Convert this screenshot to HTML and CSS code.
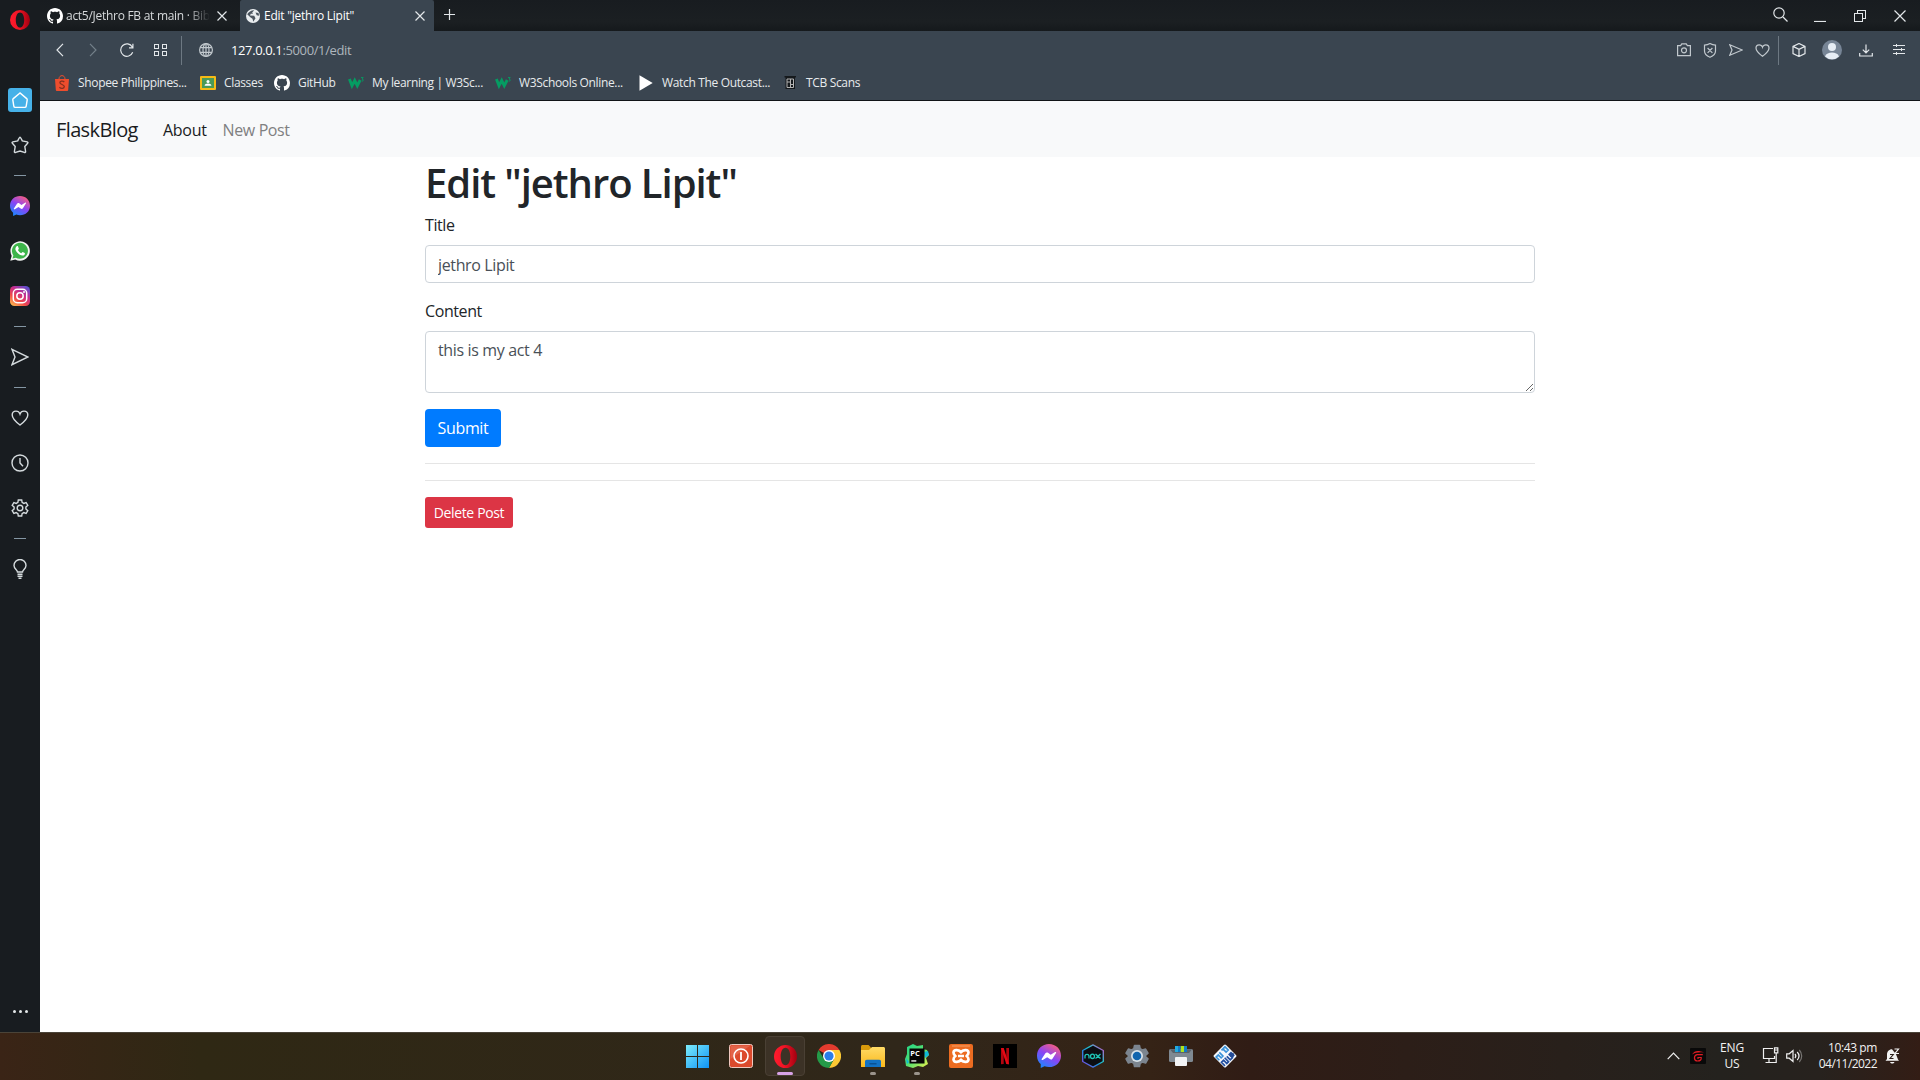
FILE: index.html
```html
<!DOCTYPE html>
<html lang="en">
<head>
<meta charset="utf-8">
<title>Edit "jethro Lipit"</title>
<link rel="stylesheet" href="styles.css">
</head>
<body>
<svg class="defs" width="0" height="0">
  <defs>
    <linearGradient id="operaRing" x1="0" x2="1"><stop offset="0" stop-color="#ff1b2d"/><stop offset=".45" stop-color="#f01425"/><stop offset="1" stop-color="#a00010"/></linearGradient>
    <linearGradient id="msg" x1=".2" y1="1" x2=".8" y2="0"><stop offset="0" stop-color="#168aff"/><stop offset=".5" stop-color="#8a45f5"/><stop offset="1" stop-color="#ff6078"/></linearGradient>
    <linearGradient id="insta" x1=".1" y1="1" x2=".8" y2="0"><stop offset="0" stop-color="#fec04f"/><stop offset=".35" stop-color="#f0484a"/><stop offset=".65" stop-color="#c72d8e"/><stop offset="1" stop-color="#5b4fd0"/></linearGradient>
    <linearGradient id="win" x1="0" y1="0" x2="1" y2="1"><stop offset="0" stop-color="#7cecfb"/><stop offset="1" stop-color="#0f93f5"/></linearGradient>
    <linearGradient id="folder" x1="0" y1="0" x2="0" y2="1"><stop offset="0" stop-color="#ffda66"/><stop offset="1" stop-color="#fbb91c"/></linearGradient>
    <linearGradient id="pcg" x1="0" y1="0" x2="1" y2="1"><stop offset="0" stop-color="#20d68a"/><stop offset=".5" stop-color="#55e070"/><stop offset="1" stop-color="#f4f04a"/></linearGradient>
    <linearGradient id="nox" x1="0" y1="1" x2="1" y2="0"><stop offset="0" stop-color="#8a3fe0"/><stop offset=".4" stop-color="#1d8fe0"/><stop offset=".6" stop-color="#22c5c9"/><stop offset="1" stop-color="#e040c8"/></linearGradient>
    <symbol id="octocat" viewBox="0 0 16 16"><path fill="#fff" d="M8 0C3.58 0 0 3.58 0 8c0 3.54 2.29 6.53 5.47 7.59.4.07.55-.17.55-.38 0-.19-.01-.82-.01-1.49-2.01.37-2.53-.49-2.69-.94-.09-.23-.48-.94-.82-1.13-.28-.15-.68-.52-.01-.53.63-.01 1.08.58 1.23.82.72 1.21 1.87.87 2.33.66.07-.52.28-.87.51-1.07-1.78-.2-3.64-.89-3.64-3.95 0-.87.31-1.59.82-2.15-.08-.2-.36-1.02.08-2.12 0 0 .67-.21 2.2.82.64-.18 1.32-.27 2-.27s1.36.09 2 .27c1.53-1.04 2.2-.82 2.2-.82.44 1.1.16 1.92.08 2.12.51.56.82 1.27.82 2.15 0 3.07-1.87 3.75-3.65 3.95.29.25.54.73.54 1.48 0 1.07-.01 1.93-.01 2.2 0 .21.15.46.55.38A8.01 8.01 0 0 0 16 8c0-4.42-3.58-8-8-8z"/></symbol>
    <symbol id="opera" viewBox="0 0 20 20"><path fill="url(#operaRing)" fill-rule="evenodd" d="M10 0a10 10 0 1 0 0 20 10 10 0 0 0 0-20zm0 2.400c2.700 0 4.200 3.500 4.200 7.600s-1.500 7.600-4.200 7.600-4.200-3.500-4.200-7.600 1.500-7.600 4.200-7.600z"/></symbol>
    <symbol id="messenger" viewBox="0 0 20 20"><path fill="url(#msg)" d="M10 0C4.300 0 0 4.200 0 9.700c0 2.900 1.200 5.300 3.100 7V20l3.200-1.400c1.100.4 2.400.6 3.700.6 5.700 0 10-4 10-9.500S15.700 0 10 0z"/><path fill="#fff" d="M3.900 12.500 7 7.700c.5-.8 1.500-.9 2.200-.4l2.200 1.600 3.700-2.200c.6-.3 1.100.3.8.8l-3 4.700c-.5.800-1.500.9-2.200.4L8.500 11l-3.700 2.300c-.6.3-1.200-.3-.9-.8z"/></symbol>
    <symbol id="w3" viewBox="0 0 16 16"><path fill="none" stroke="#059c62" stroke-width="2.900" d="M1.400 4l2.600 6.700L6.700 5.500l2.600 5.200L12.200 5"/><path fill="none" stroke="#059c62" stroke-width=".9" d="M13 2.500h2.200l-1.200 1.500c1.800 0 1.700 2.400-.2 2.200"/></symbol>
    <symbol id="heart" viewBox="0 0 18 18"><path d="M9 16C5 13 1.200 9.800 1.200 6c0-2.300 1.700-3.900 3.800-3.900C6.900 2.100 8.400 3.200 9 5c.6-1.800 2.100-2.900 4-2.900 2.100 0 3.800 1.600 3.800 3.900 0 3.800-3.800 7-7.800 10z"/></symbol>
    <symbol id="send" viewBox="0 0 18 18"><path d="M1 1.300 17 9 1 16.700 4 9z"/></symbol>
  </defs>
</svg>

<div class="screen">
  <div class="browser">
    <aside class="sidebar">
      <div class="side-logo"><svg width="20" height="20"><use href="#opera"/></svg></div>
      <div class="side-item"><span class="home"><svg class="line" width="18" height="18" viewBox="0 0 18 18"><path d="M9 2 2.300 7.600c-.3.300-.6.800-.5 1.300l1 6.200c.1.800.8 1.300 1.500 1.300h9.400c.7 0 1.400-.5 1.500-1.300l1-6.200c.1-.5-.2-1-.5-1.300z"/></svg></span></div>
      <div class="side-item"><svg class="line" width="18" height="18" viewBox="0 0 18 18"><path d="M9 1.200c.5 0 .8.600 2.300 3.700l4.900 1c.8.200 1 .8.400 1.400L13.800 10.500l.8 5c.1.900-.6 1.300-1.300.9L9 15l-4.300 1.400c-.7.400-1.400 0-1.300-.9l.8-5L1.400 7.300c-.6-.6-.4-1.200.4-1.400l4.900-1C8.200 1.800 8.500 1.200 9 1.200z"/></svg></div>
      <div class="side-sep"></div>
      <div class="side-item"><svg width="20" height="20"><use href="#messenger"/></svg></div>
      <div class="side-item"><svg width="20" height="20" viewBox="0 0 20 20"><path fill="#f2f5f2" d="M.3 19.700 1.700 14.800A9.700 9.700 0 1 1 5.300 18.400z"/><path fill="#3db54a" d="M2.500 17.500l.9-3.100a8 8 0 1 1 2.500 2.300z"/><path fill="#fff" d="M6.800 5.200c.5-.3 1-.2 1.200.3l.8 1.900c.2.500-.8 1.300-.9 1.600.8 1.600 2 2.600 3.400 3.200.4-.1 1-1.300 1.500-1.200l1.900.9c.5.300.2 1.600-.4 2.100-1.100.9-2.800.8-5-.5-2-1.200-3.600-3.300-3.900-4.900-.2-1.300.4-2.800 1.400-3.400z"/></svg></div>
      <div class="side-item"><svg width="20" height="20" viewBox="0 0 20 20"><rect width="20" height="20" rx="4.500" fill="url(#insta)"/><g fill="none" stroke="#fff" stroke-width="1.500"><rect x="3.300" y="3.300" width="13.400" height="13.400" rx="4"/><circle cx="10" cy="10" r="3.200"/></g><circle cx="14" cy="6" r="1" fill="#fff"/></svg></div>
      <div class="side-sep"></div>
      <div class="side-item"><svg class="line" width="18" height="18"><use href="#send"/></svg></div>
      <div class="side-sep"></div>
      <div class="side-item"><svg class="line" width="18" height="18"><use href="#heart"/></svg></div>
      <div class="side-item"><svg class="line" width="18" height="18" viewBox="0 0 18 18"><circle cx="9" cy="9" r="8"/><path d="M9 4v5l3 3.300"/></svg></div>
      <div class="side-item"><svg class="line" width="18" height="18" viewBox="0 0 18 18"><circle cx="9" cy="9" r="2.800"/><path d="M7.300 1h3.400l.4 2.400 1.700 1 2.300-.9L16.800 6.400 14.900 8v2l1.900 1.600-1.700 2.900-2.300-.9-1.700 1-.4 2.400H7.300l-.4-2.400-1.700-1-2.300.9-1.700-2.900L3.100 10V8L1.200 6.400l1.700-2.900 2.300.9 1.700-1z"/></svg></div>
      <div class="side-sep"></div>
      <div class="side-item"><svg class="line" width="14" height="20" viewBox="0 0 14 20"><path d="M4.500 13c0-2.200-3.500-3.200-3.500-6.500a6 6 0 0 1 12 0c0 3.300-3.500 4.300-3.500 6.500zM4.500 15.300h5M4.500 17.300h5M5.500 19.300h3"/></svg></div>
      <div class="side-more"><i></i><i></i><i></i></div>
    </aside>

    <div class="window">
      <header class="tabs">
        <div class="tab">
          <svg width="16" height="16"><use href="#octocat"/></svg>
          <span class="tab-title faded">act5/Jethro FB at main · Bib</span>
          <svg class="line close" width="10" height="10" viewBox="0 0 10 10"><path d="M.5.5l9 9M9.500.5l-9 9"/></svg>
        </div>
        <div class="tab active">
          <svg width="14" height="14" viewBox="0 0 14 14"><circle cx="7" cy="7" r="7" fill="#e9edf0"/><path fill="#4c5660" d="M1.200 5.200C2.500 3 5.500 1.100 8.200 1.300L6.200 3.500l.8 1.300H4.800L4 6.500l4.200.3 1.300 2.500-2.200 3.500-.8-3-2.200-1.600zM9.500 3.500l3 .5.700 2.700-2.500-.5z"/></svg>
          <span class="tab-title">Edit "jethro Lipit"</span>
          <svg class="line close" width="10" height="10" viewBox="0 0 10 10"><path d="M.5.5l9 9M9.500.5l-9 9"/></svg>
        </div>
        <svg class="line new-tab" width="11" height="11" viewBox="0 0 11 11"><path d="M5.500 0v11M0 5.500h11"/></svg>
        <div class="window-buttons">
          <span><svg class="line" width="15" height="15" viewBox="0 0 15 15"><circle cx="6" cy="6" r="5.200"/><path d="M10 10l4.500 4.500"/></svg></span>
          <span><svg class="line" width="12" height="12" viewBox="0 0 12 12"><path d="M0 11.500h12"/></svg></span>
          <span><svg class="line crisp" width="12" height="12" viewBox="0 0 12 12"><path d="M.5 3.500h8v8h-8zM3.500 3.500v-3h8v8h-3"/></svg></span>
          <span><svg class="line" width="12" height="12" viewBox="0 0 12 12"><path d="M.5.5l11 11M11.500.5l-11 11"/></svg></span>
        </div>
      </header>

      <div class="toolbar">
        <div class="nav-icons">
          <svg class="line" width="14" height="14" viewBox="0 0 14 14"><path d="M10 .8 4 7l6 6.200"/></svg>
          <svg class="line dim" width="14" height="14" viewBox="0 0 14 14"><path d="M4 .8 10 7l-6 6.200"/></svg>
          <svg class="line" width="14" height="14" viewBox="0 0 14 14"><path d="M12.700 9.300A6.200 6.200 0 1 1 12.300 4M12.900.8v4H9"/></svg>
          <svg class="line crisp" width="13" height="12" viewBox="0 0 13 12"><path d="M.5.5h4v4h-4zM8.500.5h4v4h-4zM.5 7.500h4v4h-4zM8.500 7.500h4v4h-4z"/></svg>
        </div>
        <div class="bar"></div>
        <svg class="line soft globe" width="14" height="14" viewBox="0 0 14 14"><circle cx="7" cy="7" r="6.400"/><ellipse cx="7" cy="7" rx="3" ry="6.400"/><path d="M1.200 4.600h11.600M1.200 9.400h11.600M7 .6v12.800"/></svg>
        <div class="address"><b>127.0.0.1</b>:5000/1/edit</div>
        <div class="page-icons">
          <svg class="line soft" width="14" height="14" viewBox="0 0 14 14"><path d="M.6 2.700h3L4.800.9h4.400l1.200 1.800h3v10H.6z"/><circle cx="7" cy="7.300" r="2.500"/></svg>
          <svg class="line soft" width="14" height="15" viewBox="0 0 14 15"><path d="M7 .6c1.700 1 3.500 1.500 5.500 1.500v6c0 3-2.500 5-5.500 6.200C4 13.100 1.500 11.100 1.500 8.100v-6c2 0 3.800-.5 5.500-1.500zM4.600 5l4.800 4.800M9.400 5 4.600 9.800"/></svg>
          <svg class="line soft" width="14" height="12" viewBox="0 0 14 12"><path d="M.8.800 13.200 6 .8 11.200 3 6z"/></svg>
          <svg class="line soft small-heart" width="15" height="15"><use href="#heart"/></svg>
        </div>
        <div class="bar"></div>
        <div class="user-icons">
          <svg class="line" width="14" height="14" viewBox="0 0 14 14"><path d="M7 .5l6 2.900v7.200l-6 2.900-6-2.900V3.400zM1 3.400l6 3 6-3M7 6.400v7"/></svg>
          <svg width="20" height="20" viewBox="0 0 20 20"><circle cx="10" cy="10" r="10" fill="#778596"/><circle cx="10" cy="7" r="4" fill="#e6edf5"/><path fill="#e6edf5" d="M3 16.500c1-3 4-4 7-4s6 1 7 4a10 10 0 0 1-14 0z"/></svg>
          <svg class="line" width="14" height="13" viewBox="0 0 14 13"><path d="M7 .5v8.200M3.800 5.700 7 8.900l3.200-3.200M.7 9v3h12.600V9"/></svg>
          <svg class="line crisp" width="12" height="12" viewBox="0 0 12 12"><path d="M0 1.500h12M0 5.500h12M0 9.500h12M3.500 0v3M8.500 4v3M3.500 8v3"/></svg>
        </div>
      </div>

      <nav class="bookmarks">
        <a><svg width="16" height="16" viewBox="0 0 16 16"><path fill="#ee4d2d" d="M1 4h14l-.8 10.700c0 .7-.6 1.300-1.300 1.300H3.100c-.7 0-1.300-.6-1.300-1.300z"/><path fill="none" stroke="#ee4d2d" d="M5 4c0-4.500 6-4.500 6 0"/><path fill="none" stroke="#83301f" stroke-width="1.300" d="M10.300 7c-1.500-1.500-4.500-1-4.400.8.100 1.900 4.400 1.500 4.400 3.700 0 2-3 2.500-4.900.8"/></svg><span>Shopee Philippines...</span></a>
        <a><svg width="16" height="16" viewBox="0 0 16 16"><rect y="1" width="16" height="14" rx="1" fill="#f5ba15"/><rect x="2" y="3" width="12" height="10" fill="#4a9a58"/><circle cx="8" cy="6.400" r="1.500" fill="#fff"/><path fill="#fff" d="M4.600 10.800c0-3 6.800-3 6.800 0z"/></svg><span>Classes</span></a>
        <a><svg width="16" height="16"><use href="#octocat"/></svg><span>GitHub</span></a>
        <a><svg width="16" height="16"><use href="#w3"/></svg><span>My learning | W3Sc...</span></a>
        <a><svg width="16" height="16"><use href="#w3"/></svg><span>W3Schools Online...</span></a>
        <a><svg width="16" height="16" viewBox="0 0 16 16"><path fill="#fff" d="M1.500.3v15.400L14.700 8z"/></svg><span>Watch The Outcast...</span></a>
        <a><svg width="16" height="16" viewBox="0 0 16 16"><path fill="#15191c" d="M2.500 1h11.500v1.500H13V14H3.500V2.500h-1z"/><path fill="none" stroke="#b3b3b3" d="M5 4h6.500v8.500H5zM8.500 4v8.500M5 7h3M9 9.500h2.500"/></svg><span>TCB Scans</span></a>
      </nav>

      <main class="page">
        <nav class="navbar">
          <a class="brand">FlaskBlog</a>
          <a class="nav-link about">About</a>
          <a class="nav-link muted">New Post</a>
        </nav>
        <div class="container">
          <h1>Edit "jethro Lipit"</h1>
          <form>
            <div class="form-group">
              <label for="title">Title</label>
              <input class="form-control" id="title" type="text" value="jethro Lipit">
            </div>
            <div class="form-group">
              <label for="content">Content</label>
              <textarea class="form-control" id="content" spellcheck="false">this is my act 4</textarea>
            </div>
            <button class="btn submit" type="button">Submit</button>
          </form>
          <hr>
          <hr>
          <button class="btn delete" type="button">Delete Post</button>
        </div>
      </main>
    </div>
  </div>

  <footer class="taskbar">
    <div class="apps">
      <span class="app"><svg width="23" height="23" viewBox="0 0 23 23"><path fill="url(#win)" d="M0 0h11v11H0zM12 0h11v11H12zM0 12h11v11H0zM12 12h11v11H12z"/></svg></span>
      <span class="app"><svg width="24" height="24" viewBox="0 0 24 24"><rect x=".5" y=".5" width="23" height="23" rx="2" fill="#dc4a2d" stroke="#efc8bf"/><path fill="#e97960" d="M1.500 1.500h20L1.500 15z" opacity=".55"/><circle cx="12" cy="12" r="7" fill="none" stroke="#fff" stroke-width="1.600"/><path stroke="#fff" stroke-width="1.800" d="M12 8v8"/></svg></span>
      <span class="app current"><svg width="23" height="23"><use href="#opera"/></svg></span>
      <span class="app"><svg width="24" height="24" viewBox="0 0 24 24"><path fill="#e33b2e" d="M12 12 1.600 6A12 12 0 0 1 22.400 6z"/><path fill="#fcc934" d="M12 12V6h10.400A12 12 0 0 1 12 24l5-9z"/><path fill="#249a48" d="M12 12l5 3-5 9A12 12 0 0 1 1.600 6L7 15z"/><circle cx="12" cy="12" r="6" fill="#fff"/><circle cx="12" cy="12" r="4.600" fill="#2a7de9"/></svg></span>
      <span class="app running"><svg width="24" height="22" viewBox="0 0 24 22"><path fill="#d89a0b" d="M0 1.500C0 .7.700 0 1.500 0h6l2.500 2.500V6H0z"/><path fill="url(#folder)" d="M0 5h8l3-3h11.500c.8 0 1.500.7 1.500 1.500V22H0z"/><path fill="#1272c4" d="M4 22v-5.500c0-1 .8-1.700 1.700-1.700h12.600c1 0 1.700.7 1.700 1.700V22z"/><path fill="#0a5295" d="M8.500 18h7v1.500h-7z"/></svg></span>
      <span class="app running"><svg width="24" height="24" viewBox="0 0 24 24"><path fill="url(#pcg)" d="M2 3l6-3 4 2 6-1v4l4 1 2 5-3 3 2 6-5 3-5-1-5 2-7-2-1-7 2-5z"/><path fill="#10b8d8" d="M19 8l4-1 1 4-4 3zM1 14l3 4-2 2z"/><rect x="4.500" y="4.500" width="15" height="15" fill="#050505"/><text x="5.300" y="11.800" class="pc-text">PC</text><path fill="#fff" d="M6.300 16.300h5v1.300h-5z"/></svg></span>
      <span class="app"><svg width="24" height="24" viewBox="0 0 24 24"><rect width="24" height="24" rx="2" fill="#ec6c21"/><path fill="#f5a16b" d="M3 1.500h18v1H3z"/><path fill="none" stroke="#fff" stroke-width="2.700" stroke-linejoin="round" d="M12 8.300C10.500 6 4.800 4.800 4.500 8.500c0 1.800.8 2.700 2 3.500-1.200.8-2 1.700-2 3.500.3 3.700 6 2.500 7.500.2 1.500 2.300 7.200 3.500 7.500-.2 0-1.800-.8-2.700-2-3.500 1.200-.8 2-1.700 2-3.500-.3-3.700-6-2.500-7.500-.2zM9 12h6"/></svg></span>
      <span class="app"><svg width="24" height="24" viewBox="0 0 24 24"><path d="M0 0h24v24H0z"/><path fill="#b1060f" d="M8 4h2.700v16L8 20.300zM13.300 4H16v16.300l-2.700-.3z"/><path fill="#e50914" d="M8 4h2.700L16 20.300l-2.700-.3z"/></svg></span>
      <span class="app"><svg width="24" height="24"><use href="#messenger"/></svg></span>
      <span class="app"><svg width="24" height="24" viewBox="0 0 24 24"><path fill="#0b0e13" stroke="url(#nox)" stroke-width="1.400" stroke-linejoin="round" d="M12 .9 22.300 6.500v11L12 23.100 1.700 17.500v-11z"/><path fill="none" stroke="#1fc7b8" stroke-width="1.300" d="M4 14.500v-2.200c0-2.600 4-2.600 4 0v2.200M14.500 10l5 4.500M19.500 10l-5 4.500"/><ellipse cx="11.500" cy="12.300" rx="2" ry="2.200" fill="none" stroke="#1fc7b8" stroke-width="1.300"/></svg></span>
      <span class="app"><svg width="24" height="24" viewBox="0 0 24 24"><path fill="#7c858f" stroke="#7c858f" stroke-width="1.500" stroke-linejoin="round" d="M9.500 1.500h5l.7 3.200 2.200 1.300 3.200-1 2.400 4.200-2.400 2.200v1.300l2.400 2.200-2.400 4.200-3.200-1-2.200 1.300-.7 3.200h-5l-.7-3.200L6.600 18l-3.200 1L1 14.900l2.400-2.200v-1.300L1 9.200 3.400 5l3.200 1 2.200-1.300z"/><circle cx="12" cy="12" r="6" fill="#d9e2e8"/><circle cx="12" cy="12" r="4.300" fill="#1265ae"/></svg></span>
      <span class="app"><svg width="24" height="20" viewBox="0 0 24 20"><rect y="3" width="24" height="13" rx="1.500" fill="#7f8992"/><path fill="#5a636b" d="M1 3.300h22L20 7H4z"/><path fill="#20abdf" d="M6 0h3v6H6z"/><path fill="#aee31d" d="M11.500 0H15v6h-3.500z"/><path fill="#117ac8" d="M9 0h2.500v6H9zM15 0h3v6h-3z"/><rect x="6" y="11" width="12" height="9" rx="1" fill="#f2f3f5"/></svg></span>
      <span class="app"><svg width="24" height="24" viewBox="0 0 24 24"><g transform="rotate(45 12 12)"><rect x="3.500" y="3.500" width="17" height="17" rx="1.500" fill="#f5f8fc"/><path fill="none" stroke="#3a92d9" stroke-width="1.700" d="M5.500 13.500h5v2.500h-4v3h4.500M5.500 10.500v-5h4.500v3H5.500"/><path fill="none" stroke="#2450a0" stroke-width="1.700" d="M18.500 5.500h-4.500v2.500h4.500v3h-5M13 13.500h5.500v2.500H14v3h5"/></g><circle cx="19" cy="11" r="2.300" fill="#234b96"/></svg></span>
    </div>
    <div class="tray">
      <svg class="line white chevron" width="13" height="8" viewBox="0 0 13 8"><path d="M.7 7.200 6.500 1.200l5.800 6"/></svg>
      <svg class="garena" width="16" height="16" viewBox="0 0 16 16"><rect width="16" height="16" rx="1" fill="#090909"/><path fill="#df1c22" d="M2 6.500C4.500 2.500 8 2 14 4.500 9 4 5 4.500 2 6.500z"/><path fill="none" stroke="#df1c22" stroke-width="1.200" d="M12.800 6.700H7C3.500 7.500 3.500 13 7.500 13c3 0 4-1.500 3.700-3.500H8v1.500"/></svg>
      <div class="lang">ENG<br>US</div>
      <svg class="line white network" width="17" height="17" viewBox="0 0 17 17"><path d="M11 1.500H1.500v10h11V9M7 11.500v4M3.500 15.500h9M12.500.8h3.300v5h-3.300zM14.200 6v9.500h-2M12.500 3h3"/></svg>
      <svg class="line white speaker" width="17" height="14" viewBox="0 0 17 14"><path d="M.7 4.800h2.500L7 1.500v11L3.200 9.200H.7zM9 5c1 1.200 1 2.800 0 4M11.200 3c2.200 2.400 2.200 5.600 0 8"/><path opacity=".4" d="M13.300 1c3.200 3.400 3.200 8.600 0 12"/></svg>
      <div class="clock"><span class="time">10:43 pm</span><br>04/11/2022</div>
      <svg class="bell" width="15" height="16" viewBox="0 0 15 16"><path fill="#f2f2f2" d="M2 6.500C2 3.500 4 1.200 7 1.200l4 5 2 5.300 1 1.300H.5L2 11zM5 14h4.500c-1 2-3.500 2-4.500 0z"/><path fill="none" stroke="#2d211b" stroke-width="1.100" d="M5 6.500h3.300L5 10.500h3.500"/><path fill="none" stroke="#f2f2f2" stroke-width="1.200" d="M9.500 1h4L10 5.500h4"/></svg>
    </div>
  </footer>
</div>
</body>
</html>
```
FILE: styles.css
```css
* { box-sizing: border-box; }
html, body { margin: 0; height: 100%; overflow: hidden; }
body { font-family: "Open Sans", "Noto Sans", sans-serif; background: #fff; }
svg { display: block; flex: none; }
.defs { position: absolute; }

.screen { display: flex; flex-direction: column; width: 1920px; height: 1080px; }
.browser { display: flex; height: 1032px; }
.window { flex: 1; display: flex; flex-direction: column; min-width: 0; }

.line { fill: none; stroke: #e3e7ea; stroke-width: 1.2; }
.line.soft { stroke: #c1c8cd; }
.line.dim { stroke: #74808a; }
.line.white { stroke: #f0f0f0; }
.line.small-heart { stroke-width: 1.5; }
.crisp { stroke-width: 1; shape-rendering: crispEdges; }

/* Browser sidebar */
.sidebar { width: 40px; background: #181c20; display: flex; flex-direction: column; align-items: center; }
.side-logo { height: 77.5px; padding-top: 10px; }
.side-item { height: 45px; display: grid; place-items: center; }
.sidebar .line { stroke-width: 1.4; stroke: #d5dbde; margin-right: 1px; }
.home { width: 24px; height: 24px; border-radius: 3px; background: #46b1e8; display: grid; place-items: center; }
.sidebar .home .line { stroke: #fff; margin-right: 0; }
.side-sep { width: 12px; height: 16px; padding-top: 7px; }
.side-sep::before { content: ""; display: block; height: 1px; background: #8496a3; }
.side-more { margin-top: auto; margin-bottom: 19px; display: flex; gap: 3px; }
.side-more i { width: 3px; height: 3px; border-radius: 50%; background: #e4e8ea; }

/* Tab strip */
.tabs { height: 31px; display: flex; align-items: center; background: linear-gradient(#181c20, #1b1f22 70%, #15191c); }
.tab { width: 200px; height: 31px; display: flex; align-items: center; padding: 0 13px 0 7px; gap: 3px; font-size: 12px; letter-spacing: -0.28px; color: #d6d9db; }
.tab.active { width: 194px; background: #3a4550; color: #fff; padding: 0 9px 0 6px; gap: 4px; border-radius: 2px 2px 0 0; letter-spacing: -0.24px; }
.tab-title { flex: 1; white-space: nowrap; overflow: hidden; }
.faded { -webkit-mask-image: linear-gradient(90deg, #000 84%, transparent); mask-image: linear-gradient(90deg, #000 84%, transparent); }
.tab .close { margin-left: 4px; }
.new-tab { margin: 0 0 2px 10px; }
.window-buttons { margin-left: auto; display: flex; }
.window-buttons span { width: 40px; height: 31px; display: grid; place-items: center; }
.window-buttons span:first-child { padding-bottom: 2px; }

/* Address row */
.toolbar { height: 37px; background: #3a4550; display: flex; align-items: center; padding: 1px 4px 0 3px; }
.nav-icons, .page-icons, .user-icons { display: grid; align-items: center; justify-items: center; }
.nav-icons { grid-template-columns: repeat(4, 33.500px); margin-right: 4px; }
.bar { width: 1px; height: 29px; background: #6d7882; }
.globe { margin: 0 18px 0 17px; }
.address { flex: 1; font-size: 13px; letter-spacing: -0.38px; color: #aeb6bd; }
.address b { font-weight: 400; color: #fff; }
.page-icons { grid-template-columns: repeat(4, 26px); margin-right: 3px; }
.user-icons { grid-template-columns: repeat(4, 33.500px); margin-left: 3px; }

/* Bookmarks bar */
.bookmarks { height: 33px; background: #3a4550; border-bottom: 1px solid #111417; display: grid; grid-template-columns: 146px 74px 74px 147px 143px 144px 100px; padding: 0 0 2px 14px; align-items: center; }
.bookmarks a { display: flex; align-items: center; gap: 8px; font-size: 12px; letter-spacing: -0.34px; color: #e8ebed; white-space: nowrap; }
.bookmarks span { padding-bottom: 2px; }

/* Blog page */
.page { flex: 1; background: #fff; color: #212529; font-size: 16px; line-height: 24px; }
.navbar { height: 56px; background: #f8f9fa; display: flex; align-items: center; padding: 2px 16px 0; }
.brand { width: 83px; font-size: 20px; margin-right: 16px; letter-spacing: -0.62px; color: #1a1c1e; }
.nav-link { padding: 0 8px; letter-spacing: -0.38px; }
.about { color: #1a1c1e; letter-spacing: -0.3px; }
.muted { color: #7f8081; }
.container { width: 1140px; margin: 0 auto; padding: 0 15px; }
h1 { margin: 0; padding-top: 2px; height: 56px; font-size: 40px; line-height: 48px; font-weight: 600; letter-spacing: -1.05px; }
.form-group { margin-bottom: 16px; }
label { display: block; margin-bottom: 8px; letter-spacing: -0.4px; }
.form-control { display: block; width: 100%; height: 38px; padding: 7px 12px 5px; font: inherit; letter-spacing: -0.36px; color: #495057; background: #fff; border: 1px solid #ced4da; border-radius: 4px; outline: none; }
textarea.form-control { height: 62px; padding: 6px 12px; resize: vertical; overflow: auto; }
.btn { display: block; border: 0; border-radius: 4px; color: #fff; font: inherit; letter-spacing: -0.36px; padding: 0; text-align: center; }
.submit { width: 76px; height: 38px; background: #007bff; }
.delete { width: 88px; height: 31px; background: #dc3545; border-radius: 3px; font-size: 14px; }
hr { margin: 16px 0; border: 0; border-top: 1px solid #e5e5e5; }

/* Desktop taskbar */
.taskbar { height: 48px; border-top: 1px solid #4a4338; background: linear-gradient(90deg, #3a2416 0, #2f2814 200px, #30271a 900px, #352316 1150px, #301c15 1250px, #24221e 1720px, #27221e 1820px, #331d15 1920px); display: grid; grid-template-columns: 675px 572px 1fr; }
.apps { grid-column: 2; display: flex; }
.app { width: 44px; height: 46px; display: grid; place-items: center; position: relative; }
.app.current::before { content: ""; position: absolute; inset: 3px 2px; border-radius: 4px; border: 1px solid #4a4034; background: #3c3226; }
.app.current svg { position: relative; }
.app.running::after, .app.current::after { content: ""; position: absolute; left: 19px; bottom: 4px; width: 6px; height: 3px; border-radius: 2px; background: #9b948c; }
.app.current::after { left: 14px; width: 16px; background: #d7a2e6; }
.pc-text { font: 700 7.500px "Open Sans", sans-serif; fill: #fff; }
.tray { display: flex; align-items: center; justify-content: flex-end; padding: 0 20px 2px 0; color: #f2f2f2; font-size: 12px; line-height: 16px; letter-spacing: -0.1px; }
.garena { margin-left: 10px; }
.lang { width: 36px; margin-left: 8px; text-align: center; }
.network { margin-left: 12px; }
.speaker { margin-left: 7px; }
.clock { width: 67px; margin-left: 7px; text-align: right; white-space: nowrap; letter-spacing: -0.55px; }
.time { letter-spacing: -0.4px; }
.bell { margin-left: 8px; }
```
